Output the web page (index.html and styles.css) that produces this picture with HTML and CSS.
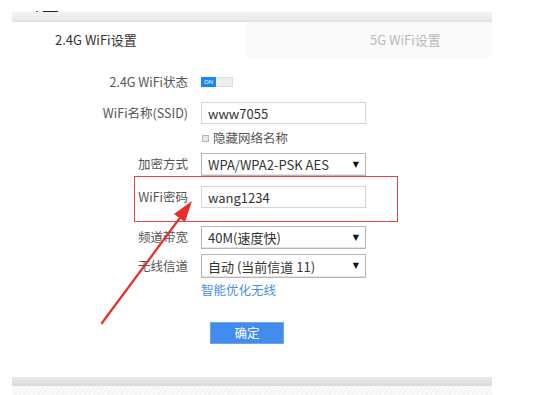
FILE: index.html
```html
<!DOCTYPE html>
<html lang="zh-CN">
<head>
    <meta charset="UTF-8">
    <meta name="viewport" content="width=device-width, initial-scale=1.0">
    <title>无线设置</title>
    <link rel="stylesheet" href="styles.css">
</head>
<body>
    <div class="top">
        <span class="crumb-dot"></span>
        <span class="crumb-line"></span>
    </div>

    <div class="panel">
        <div class="panel-head"></div>

        <div class="tabs">
            <div class="tab active">2.4G WiFi设置</div>
            <div class="tab">5G WiFi设置</div>
        </div>

        <div class="form">
            <div class="row row-status">
                <label class="label">2.4G WiFi状态</label>
                <div class="toggle">
                    <span class="toggle-on">ON</span>
                    <span class="toggle-off"></span>
                </div>
            </div>

            <div class="row row-ssid">
                <label class="label">WiFi名称(SSID)</label>
                <input class="field" type="text" value="www7055">
            </div>

            <div class="row row-hide">
                <span class="label"></span>
                <span class="check"></span>
                <span class="check-text">隐藏网络名称</span>
            </div>

            <div class="row row-sec">
                <label class="label">加密方式</label>
                <div class="select">WPA/WPA2-PSK AES<span class="caret">▼</span></div>
            </div>

            <div class="row row-pwd marked">
                <label class="label">WiFi密码</label>
                <input class="field" type="text" value="wang1234">
            </div>

            <div class="row row-band">
                <label class="label">频道带宽</label>
                <div class="select">40M(速度快)<span class="caret">▼</span></div>
            </div>

            <div class="row row-chan">
                <label class="label">无线信道</label>
                <div class="select">自动 (当前信道 11)<span class="caret">▼</span></div>
            </div>

            <div class="row row-link">
                <span class="label"></span>
                <a class="link" href="#">智能优化无线</a>
            </div>

            <div class="row row-btn">
                <button class="btn">确定</button>
            </div>
        </div>

        <div class="panel-foot"></div>
        <div class="panel-hatch"></div>
    </div>

    <!-- arrow annotation -->
    <svg class="annot" width="549" height="395" viewBox="0 0 549 395">
        <line x1="102" y1="323" x2="185" y2="211" stroke="#ec2b2b" stroke-width="2.2" stroke-linecap="round"/>
        <polygon points="192,201 174,214 185,222" fill="#ec2b2b"/>
    </svg>
</body>
</html>
```

FILE: styles.css
```css
body {
    margin: 0;
    background: #fff;
    font-family: "Noto Sans CJK SC", "Liberation Sans", sans-serif;
    font-size: 13px;
    color: #333;
    width: 549px;
    height: 395px;
    overflow: hidden;
    position: relative;
}
.top {
    height: 12px;
    display: flex;
    align-items: flex-end;
    padding-left: 36px;
    gap: 5px;
}
.crumb-dot {
    width: 2px;
    height: 1px;
    background: #666;
}
.crumb-line {
    width: 15px;
    height: 1px;
    background: #222;
}
.panel {
    margin-left: 12px;
    width: 480px;
}
.panel-head {
    height: 10px;
    background: linear-gradient(#f2f2f4, #e9eaec 80%, #dcdde0);
}
.tabs {
    display: flex;
    height: 35px;
}
.tab {
    display: flex;
    align-items: center;
    line-height: 1;
    font-size: 13px;
}
.tab.active {
    width: 235px;
    padding-left: 43px;
    box-sizing: border-box;
    background: #fff;
    color: #333;
}
.tab:not(.active) {
    flex: 1;
    padding-left: 123px;
    background: #fafafa;
    color: #b9b9b9;
}
.form {
    display: flex;
    flex-direction: column;
}
.row {
    display: flex;
    align-items: center;
    position: relative;
}
.label {
    width: 189px;
    flex: none;
    text-align: right;
    padding-right: 13px;
    box-sizing: border-box;
    font-size: 12.5px;
    color: #555;
    line-height: 1;
}
.row-status { margin-top: 16px; height: 18px; }
.row-ssid   { margin-top: 11px; height: 22px; }
.row-hide   { margin-top: 6px;  height: 16px; }
.row-sec    { margin-top: 7px;  height: 23px; }
.row-pwd    { margin-top: 10px; height: 22px; }
.row-band   { margin-top: 18px; height: 23px; }
.row-chan   { margin-top: 5px;  height: 24px; }
.row-link   { margin-top: 4px;  height: 16px; }
.row-btn    { margin-top: 24px; height: 22px; padding-left: 198px; }

.toggle {
    display: flex;
    width: 32px;
    height: 10px;
}
.toggle-on {
    width: 15px;
    background: #1a86ee;
    color: #fff;
    font-size: 6px;
    line-height: 10px;
    text-align: center;
    font-family: "Liberation Sans", sans-serif;
}
.toggle-off {
    flex: 1;
    background: #eeeeee;
    border: 1px solid #dedede;
    border-left: none;
}
.field {
    width: 165px;
    height: 100%;
    box-sizing: border-box;
    border: 1px solid #d6d6d6;
    padding: 0 6px;
    font: inherit;
    font-size: 13px;
    color: #333;
    outline: none;
}
.check {
    width: 5px;
    height: 5px;
    border: 1px solid #b5b5b5;
    background: #e6e6e6;
    margin-left: 1px;
}
.check-text {
    margin-left: 4px;
    font-size: 12.5px;
    color: #555;
    line-height: 1;
}
.select {
    width: 165px;
    height: 100%;
    box-sizing: border-box;
    border: 1px solid #b7b7b7;
    box-shadow: inset 0 -1px 0 #e4e4e4;
    padding: 0 6px;
    display: flex;
    align-items: center;
    justify-content: space-between;
    font-size: 13px;
    color: #333;
    line-height: 1;
}
.caret {
    font-size: 8px;
    color: #111;
    font-family: "DejaVu Sans", sans-serif;
}
.marked::after {
    content: "";
    position: absolute;
    left: 122px;
    top: -10px;
    width: 262px;
    height: 44px;
    border: 1px solid #e84548;
}
.link {
    color: #4a90e8;
    text-decoration: none;
    font-size: 12.5px;
    line-height: 1;
}
.btn {
    width: 74px;
    height: 22px;
    border: 1px solid #6aa6f0;
    background: #428ced;
    color: #fff;
    font: inherit;
    font-size: 12.5px;
    line-height: 1;
    padding: 0;
}
.panel-foot {
    margin-top: 33px;
    height: 9px;
    background: linear-gradient(#e7e8ea, #dadbdd);
}
.panel-hatch {
    height: 9px;
    background: repeating-linear-gradient(-60deg, #f4f4f4 0 2px, #fbfbfb 2px 4px);
}
.annot {
    position: absolute;
    left: 0;
    top: 0;
    pointer-events: none;
}
```
